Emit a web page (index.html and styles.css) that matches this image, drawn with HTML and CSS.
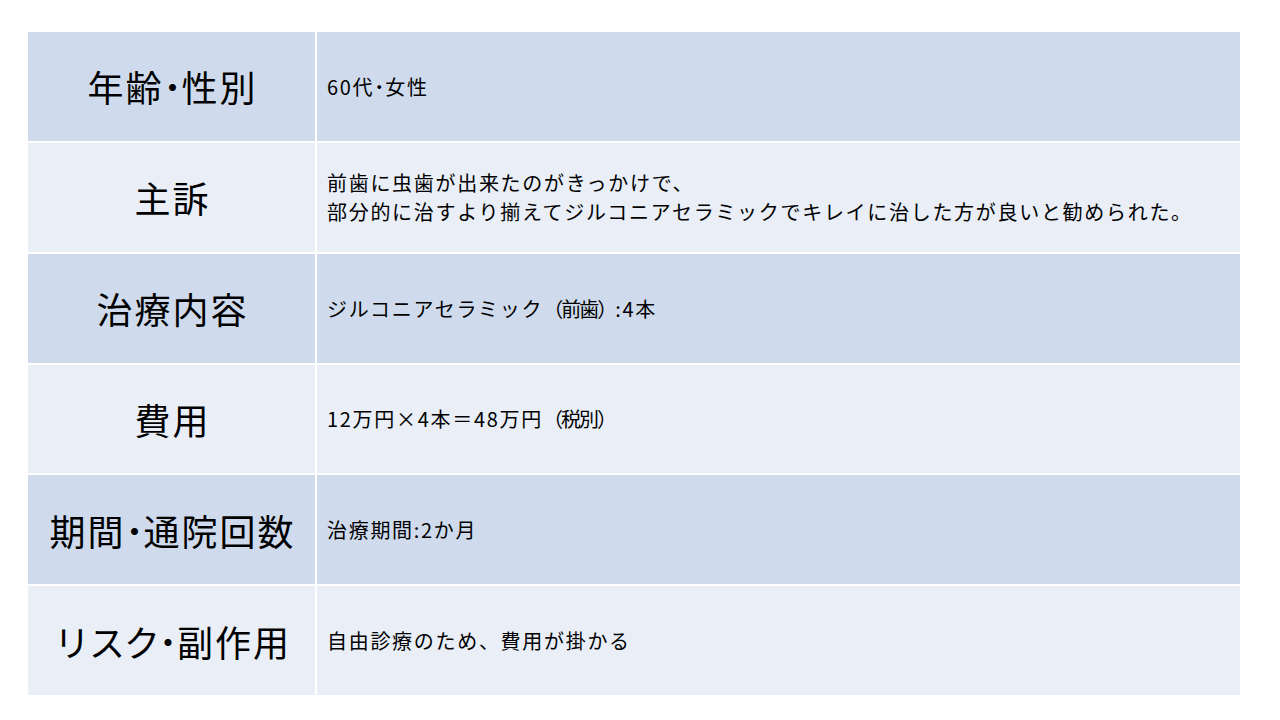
FILE: index.html
```html
<!DOCTYPE html>
<html lang="ja">
<head>
<meta charset="utf-8">
<link rel="stylesheet" href="styles.css">
</head>
<body>
<div class="table">
  <div class="cell label dark">年齢<span class="dot">･</span>性別</div>
  <div class="cell value dark">60代<span class="dot-s">･</span>女性</div>
  <div class="cell label light">主訴</div>
  <div class="cell value light">前歯に虫歯が出来たのがきっかけで、<br>部分的に治すより揃えてジルコニアセラミックでキレイに治した方が良いと勧められた。</div>
  <div class="cell label dark">治療内容</div>
  <div class="cell value dark"><span>ジルコニアセラミック<span class="paren">（前歯）</span>:4本</span></div>
  <div class="cell label light">費用</div>
  <div class="cell value light"><span>12万円×4本＝48万円<span class="paren">（税別）</span></span></div>
  <div class="cell label dark">期間<span class="dot">･</span>通院回数</div>
  <div class="cell value dark">治療期間:2か月</div>
  <div class="cell label light"><span class="kana">リスク</span><span class="dot">･</span>副作用</div>
  <div class="cell value light">自由診療のため、費用が掛かる</div>
</div>
</body>
</html>
```
FILE: styles.css
```css
html, body {
  margin: 0;
  padding: 0;
  background: #ffffff;
}
body {
  width: 1280px;
  height: 720px;
  padding: 32px 0 0 28px;
  box-sizing: border-box;
  font-family: "Noto Sans CJK JP", "Noto Sans", sans-serif;
  color: #000;
}
.table {
  display: grid;
  width: 1212px;
  height: 663px;
  grid-template-columns: 287px 1fr;
  grid-template-rows: repeat(6, 1fr);
  column-gap: 2px;
  row-gap: 2px;
  background: #ffffff;
}
.cell {
  display: flex;
  align-items: center;
}
.dark { background: #cfdbed; }
.light { background: #e9eef7; }
.label {
  justify-content: center;
  font-size: 36px;
  letter-spacing: 2px;
  padding-left: 2px;
}
.kana {
  letter-spacing: -1px;
}
.dot {
  display: inline-block;
  width: 15px;
  text-align: center;
  letter-spacing: 0;
  margin-right: 3px;
  font-weight: 700;
}
.dot-s {
  display: inline-block;
  width: 10px;
  text-align: center;
  letter-spacing: 0;
  margin-right: 1px;
  font-weight: 700;
}
.value {
  padding-left: 10px;
  font-size: 20px;
  letter-spacing: 1.7px;
  line-height: 29px;
}
.paren {
  letter-spacing: -2px;
}
```
